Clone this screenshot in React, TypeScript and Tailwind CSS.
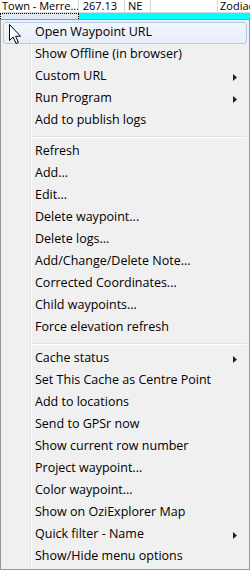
import React from "react";

type Item = { label: string; sub?: boolean; sep?: boolean; hl?: boolean };

const items: Item[] = [
  { label: "Open Waypoint URL", hl: true },
  { label: "Show Offline (in browser)" },
  { label: "Custom URL", sub: true },
  { label: "Run Program", sub: true },
  { label: "Add to publish logs" },
  { label: "", sep: true },
  { label: "Refresh" },
  { label: "Add..." },
  { label: "Edit..." },
  { label: "Delete waypoint..." },
  { label: "Delete logs..." },
  { label: "Add/Change/Delete Note..." },
  { label: "Corrected Coordinates..." },
  { label: "Child waypoints..." },
  { label: "Force elevation refresh" },
  { label: "", sep: true },
  { label: "Cache status", sub: true },
  { label: "Set This Cache as Centre Point" },
  { label: "Add to locations" },
  { label: "Send to GPSr now" },
  { label: "Show current row number" },
  { label: "Project waypoint..." },
  { label: "Color waypoint..." },
  { label: "Show on OziExplorer Map" },
  { label: "Quick filter - Name", sub: true },
  { label: "Show/Hide menu options" },
];

function Arrow() {
  return (
    <svg width="4" height="7" viewBox="0 0 4 7" className="absolute right-[9px] top-[7px]">
      <path d="M0 0 L4 3.5 L0 7 Z" fill="#222" />
    </svg>
  );
}

function Cursor() {
  return (
    <svg width="14" height="21" viewBox="0 0 14 21" className="absolute left-[5px] top-[1px]">
      <path d="M0.5 0.5 L0.5 16.5 L4.2 13 L7 19.5 L9.4 18.4 L6.6 12.2 L11.5 12.2 Z" fill="#fff" stroke="#000" strokeWidth="1" strokeLinejoin="miter" />
    </svg>
  );
}

export default function App() {
  const font = { fontFamily: '"Open Sans", "Noto Sans", sans-serif' };
  return (
    <div className="relative w-[250px] h-[570px] overflow-hidden bg-white" style={font}>
      {/* grid behind */}
      <div className="flex h-[13px] border-b border-[#d8d8d8] text-[11px] leading-[11px] text-black">
        <div className="w-[79px] border-r border-[#d8d8d8] pl-[2px] whitespace-nowrap overflow-hidden">Town - Merre...</div>
        <div className="w-[46px] border-r border-[#d8d8d8] text-right pr-[7px] whitespace-nowrap">267.13</div>
        <div className="w-[26px] border-r border-[#d8d8d8] pl-[3px]">NE</div>
        <div className="w-[67px] border-r border-[#d8d8d8]"></div>
        <div className="flex-1 pl-[2px] whitespace-nowrap overflow-hidden">Zodiac</div>
      </div>
      <div className="flex h-[12px]">
        <div className="w-[79px] bg-[#dfe9f5] border border-dotted border-black"></div>
        <div className="flex-1 bg-[#00ffff]"></div>
      </div>

      {/* menu */}
      <div className="absolute left-0 top-[19px] w-[250px] h-[551px] bg-[#f0f0f0] border border-[#979797]">
        <div className="absolute left-[29px] top-[2px] bottom-[2px] w-px bg-[#e2e3e3]" />
        <div className="absolute left-[30px] top-[2px] bottom-[2px] w-px bg-white" />
        <div className="relative flex flex-col pt-[2px] px-[2px]">
          {items.map((it, i) =>
            it.sep ? (
              <div key={i} className="h-[9px] pl-[29px] flex flex-col justify-center">
                <div className="h-px bg-[#e0e0e0]" />
                <div className="h-px bg-white" />
              </div>
            ) : (
              <div
                key={i}
                className={
                  "relative h-[22px] flex items-center pl-[31px] text-[12.5px] text-black whitespace-nowrap " +
                  (it.hl ? "rounded-[3px] border border-[#aeccf1] bg-[linear-gradient(#f2f6fb,#e6eef9)]" : "border border-transparent")
                }
              >
                {it.hl && <Cursor />}
                <span className="relative -top-[0.5px]">{it.label}</span>
                {it.sub && <Arrow />}
              </div>
            )
          )}
        </div>
      </div>
    </div>
  );
}
